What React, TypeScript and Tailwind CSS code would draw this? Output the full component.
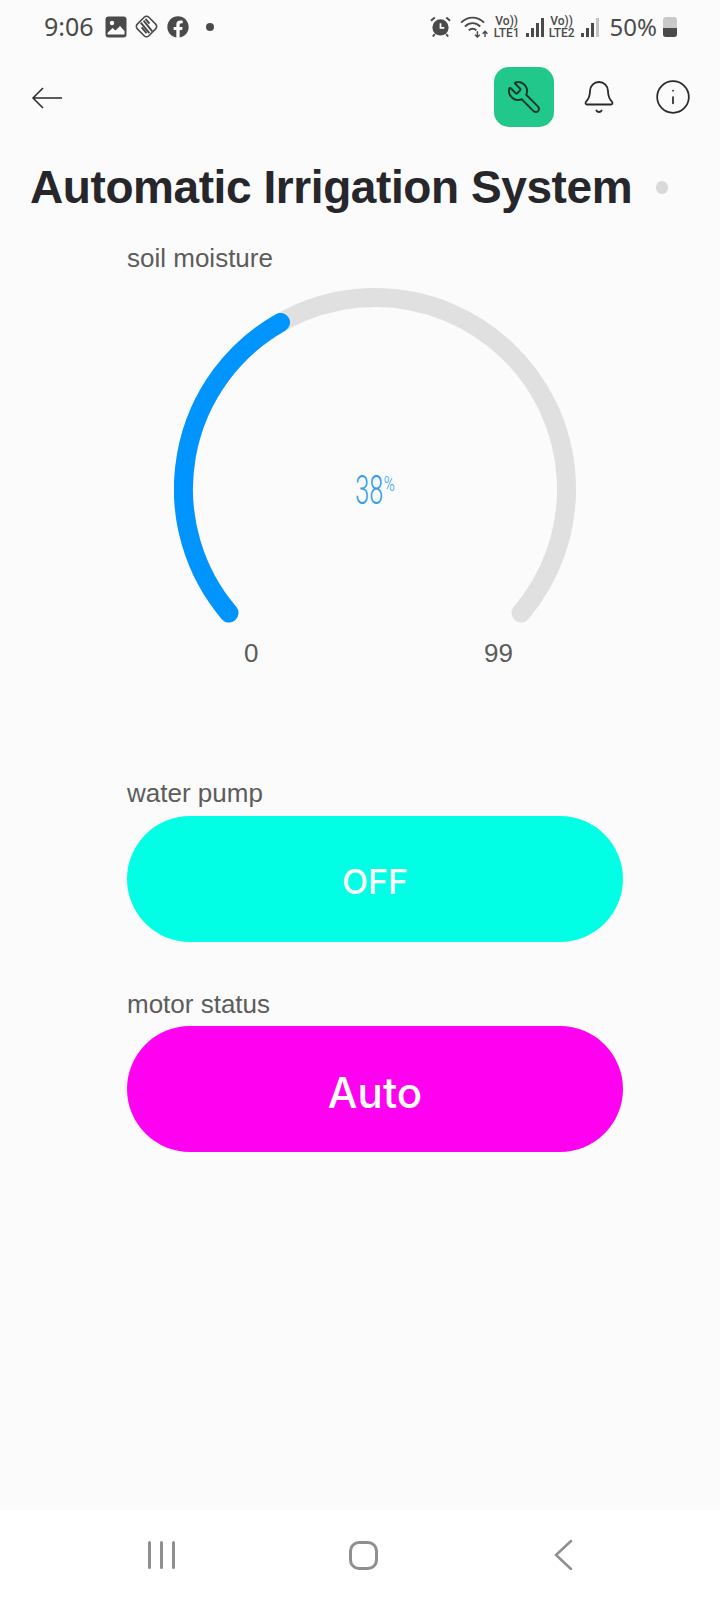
import { Bell, Info, Wrench } from 'lucide-react';
import { FaFacebook } from 'react-icons/fa';

const sans = { fontFamily: '"Liberation Sans", Arial, sans-serif' };

function Signal({ dim }: { dim?: boolean }) {
  const heights = [4, 9, 14, 19];
  return (
    <div className="flex items-end gap-[2px] h-[20px]">
      {heights.map((h, i) => (
        <div
          key={h}
          className={i === 3 && dim ? 'w-[3px] bg-[#c4c4c4]' : 'w-[3px] bg-[#4a4a4a]'}
          style={{ height: h }}
        />
      ))}
    </div>
  );
}

function Lte({ label }: { label: string }) {
  return (
    <div className="flex flex-col items-center text-[12px] leading-[12px] font-medium text-[#4a4a4a] font-['Roboto',sans-serif]">
      <span>Vo))</span>
      <span>{label}</span>
    </div>
  );
}

function StatusBar() {
  return (
    <div className="h-[52px] flex items-center justify-between pl-[44px] pr-[43px] pt-[1px] text-[#4a4a4a]">
      <div className="flex items-center">
        <span className="text-[25px] font-['Noto_Sans',sans-serif] mr-[11px]">9:06</span>
        <svg viewBox="0 0 22 22" className="w-[22px] h-[22px] mr-[7px]">
          <rect x="0.500" y="0.500" width="21" height="21" rx="3" fill="#4a4a4a" />
          <circle cx="7" cy="7" r="2.200" fill="#fbfbfb" />
          <path d="M2.500 17l5-5 3 2.500 4.500-4.500 4.500 5v3.500H2.500z" fill="#fbfbfb" />
        </svg>
        <svg viewBox="0 0 26 26" className="w-[25px] h-[25px] mr-[8px]" fill="none" stroke="#4a4a4a" strokeWidth="1.600">
          <rect x="4.500" y="4.500" width="17" height="17" rx="3.500" transform="rotate(45 13 13)" />
          <path d="M7 9l9 11M10 7l9 11M12 5l4 5M8 14l5 6" strokeWidth="2" />
        </svg>
        <FaFacebook size={22} className="mr-[17px]" />
        <div className="w-[8px] h-[8px] rounded-full bg-[#4a4a4a]" />
      </div>
      <div className="flex items-center">
        <svg viewBox="0 0 22 22" className="w-[21px] h-[21px] mr-[9px]">
          <circle cx="11" cy="12" r="8.500" fill="#4a4a4a" />
          <path d="M11 7.500V12.500H15" stroke="#fbfbfb" strokeWidth="1.800" fill="none" />
          <path d="M1 5l4-3.500M21 5l-4-3.500M5 19l-2 2.500M17 19l2 2.500" stroke="#4a4a4a" strokeWidth="2" />
        </svg>
        <svg viewBox="0 0 30 24" className="w-[29px] h-[23px] mr-[5px]" fill="none" stroke="#4a4a4a" strokeWidth="2">
          <path d="M1 8c7-7 17-7 24 0M5 12c5-4.500 11-4.500 16 0M9 16c3-2.500 5-2.500 8 0" />
          <path d="M18 17v6M15.500 20.500l2.500 2.500 2.500-2.500M26 23v-6M23.500 19.500l2.500-2.500 2.500 2.500" strokeWidth="1.500" />
        </svg>
        <Lte label="LTE1" />
        <div className="ml-[6px] mr-[5px]">
          <Signal />
        </div>
        <Lte label="LTE2" />
        <div className="ml-[6px] mr-[11px]">
          <Signal dim />
        </div>
        <span className="text-[24px] font-['Noto_Sans',sans-serif] mr-[6px]">50%</span>
        <div className="w-[14px] h-[20px] rounded-[3px] bg-[#c9c9c9] relative overflow-hidden">
          <div className="absolute bottom-0 left-0 right-0 h-[9px] bg-[#4a4a4a]" />
        </div>
      </div>
    </div>
  );
}

function Header() {
  return (
    <div className="h-[60px] mt-[15px] flex items-center pl-[31px] pr-[28px] text-[#2a2a2e]">
      <svg viewBox="0 0 32 22" className="w-[32px] h-[22px] mt-[1px]" fill="none" stroke="#2a2a2e" strokeWidth="1.500">
        <path d="M31 11H2M12 1L2 11l10 10" />
      </svg>
      <div className="ml-auto w-[60px] h-[60px] rounded-[15px] bg-[#22c78c] flex items-center justify-center">
        <Wrench size={36} strokeWidth={1.3} className="-scale-x-100 text-[#12382c]" />
      </div>
      <Bell size={36} strokeWidth={1.2} className="ml-[27px]" />
      <Info size={38} strokeWidth={1.1} className="ml-[37px]" />
    </div>
  );
}

function Gauge() {
  return (
    <div className="relative w-[402px] h-[350px] ml-[174px] mt-[14px]">
      <svg viewBox="0 0 402 350" className="w-[402px] h-[350px]" fill="none" strokeWidth="19" strokeLinecap="round">
        <path d="M55 325 A191.500 191.500 0 1 1 347 325" stroke="#e0e0e0" />
        <path d="M55 325 A191.500 191.500 0 0 1 106.500 34.400" stroke="#0094ff" />
      </svg>
      <div className="absolute left-0 top-0 w-[402px] h-[402px] flex items-center justify-center">
        <div className="flex items-start gap-[1px] mt-[3px] text-[#2f9df0] font-['Roboto',sans-serif] font-light">
          <div className="w-[28px] h-[28px] flex items-center justify-center">
            <span className="text-[40px] leading-[28px] scale-x-[0.63]">38</span>
          </div>
          <div className="w-[11px] h-[15px] flex items-center justify-center">
            <span className="text-[20px] leading-[15px] scale-x-75">%</span>
          </div>
        </div>
      </div>
    </div>
  );
}

export default function App() {
  return (
    <div className="w-[720px] h-[1600px] bg-[#fbfbfb] flex flex-col" style={sans}>
      <StatusBar />
      <Header />

      <div className="mt-[28px] pl-[30px] flex items-center">
        <h1 className="text-[46px] leading-[64px] font-bold text-[#26262b] tracking-[-0.42px]">Automatic Irrigation System</h1>
        <div className="w-[12px] h-[13px] rounded-full bg-[#d9d9d9] ml-[24px]" />
      </div>

      <div className="ml-[127px] mt-[23px] text-[26px] leading-[32px] text-[#5c5c5c]">soil moisture</div>

      <div className="relative">
        <Gauge />
        <span className="absolute left-[244px] top-[365px] text-[26px] leading-[28px] text-[#5c5c5c]">0</span>
        <span className="absolute left-[484px] top-[365px] text-[26px] leading-[28px] text-[#5c5c5c]">99</span>
      </div>

      <div className="ml-[127px] mt-[139px] text-[26px] leading-[32px] text-[#5c5c5c]">water pump</div>
      <div className="ml-[127px] w-[496px] h-[126px] mt-[7px] pt-[4px] rounded-full bg-[#00ffe5] flex items-center justify-center text-white text-[34px] font-medium font-['Inter',sans-serif]">
        OFF
      </div>

      <div className="ml-[127px] mt-[46px] text-[26px] leading-[32px] text-[#5c5c5c]">motor status</div>
      <div className="ml-[127px] w-[496px] h-[126px] mt-[6px] pt-[6px] rounded-full bg-[#ff00f0] flex items-center justify-center text-white text-[42px] font-medium font-['Inter',sans-serif]">
        Auto
      </div>

      <div className="mt-auto h-[90px] bg-white flex items-center justify-between pl-[148px] pr-[147px]">
        <div className="flex gap-[9px]">
          <div className="w-[3px] h-[28px] rounded-full bg-[#8f8f8f]" />
          <div className="w-[3px] h-[28px] rounded-full bg-[#8f8f8f]" />
          <div className="w-[3px] h-[28px] rounded-full bg-[#8f8f8f]" />
        </div>
        <div className="w-[29px] h-[29px] rounded-[10px] border-[3px] border-[#8f8f8f] -ml-[2px]" />
        <svg viewBox="0 0 20 32" className="w-[20px] h-[32px]" fill="none" stroke="#8f8f8f" strokeWidth="2.500" strokeLinecap="round">
          <path d="M18 2 L3 16 L18 30" />
        </svg>
      </div>
    </div>
  );
}
